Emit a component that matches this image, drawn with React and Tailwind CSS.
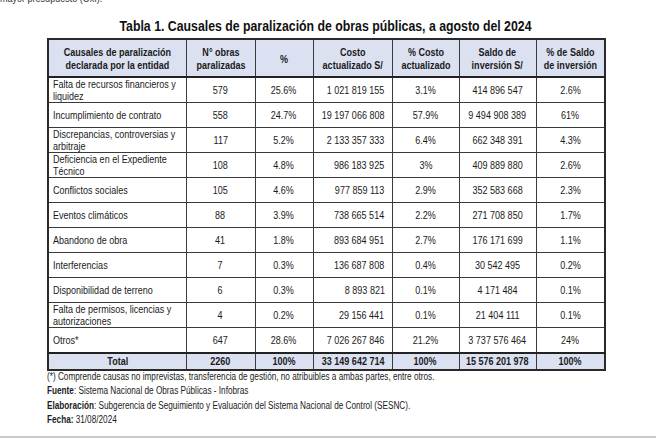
import React from 'react';

// Arial Narrow is not installed, so Liberation Sans (Arial metrics) is squeezed horizontally
const font = "font-['Liberation_Sans','Arial',sans-serif]";

const headers = [
  'Causales de paralización\ndeclarada por la entidad',
  'N° obras\nparalizadas',
  '%',
  'Costo\nactualizado S/',
  '% Costo\nactualizado',
  'Saldo de\ninversión S/',
  '% de Saldo\nde inversión',
];

const widths = ['w-[138px]', 'w-[69px]', 'w-[58px]', 'w-[79px]', 'w-[67px]', 'w-[77px]', 'w-[69px]'];

const rows = [
  ['Falta de recursos financieros y\nliquidez', '579', '25.6%', '1 021 819 155', '3.1%', '414 896 547', '2.6%'],
  ['Incumplimiento de contrato', '558', '24.7%', '19 197 066 808', '57.9%', '9 494 908 389', '61%'],
  ['Discrepancias, controversias y\narbitraje', '117', '5.2%', '2 133 357 333', '6.4%', '662 348 391', '4.3%'],
  ['Deficiencia en el Expediente\nTécnico', '108', '4.8%', '986 183 925', '3%', '409 889 880', '2.6%'],
  ['Conflictos sociales', '105', '4.6%', '977 859 113', '2.9%', '352 583 668', '2.3%'],
  ['Eventos climáticos', '88', '3.9%', '738 665 514', '2.2%', '271 708 850', '1.7%'],
  ['Abandono de obra', '41', '1.8%', '893 684 951', '2.7%', '176 171 699', '1.1%'],
  ['Interferencias', '7', '0.3%', '136 687 808', '0.4%', '30 542 495', '0.2%'],
  ['Disponibilidad de terreno', '6', '0.3%', '8 893 821', '0.1%', '4 171 484', '0.1%'],
  ['Falta de permisos, licencias y\nautorizaciones', '4', '0.2%', '29 156 441', '0.1%', '21 404 111', '0.1%'],
  ['Otros*', '647', '28.6%', '7 026 267 846', '21.2%', '3 737 576 464', '24%'],
];

const total = ['Total', '2260', '100%', '33 149 642 714', '100%', '15 576 201 978', '100%'];

function Narrow({ children, side = 'center' }) {
  const j = side === 'left' ? 'justify-start' : side === 'right' ? 'justify-end' : 'justify-center';
  const o = side === 'left' ? 'origin-left text-left' : side === 'right' ? 'origin-right text-right' : 'origin-center text-center';
  return (
    <div className={`flex ${j}`}>
      <span className={`inline-block whitespace-pre scale-x-[0.82] ${o}`}>{children}</span>
    </div>
  );
}

function side(i) {
  if (i === 0) return 'left';
  if (i === 3) return 'right';
  return 'center';
}

export default function App() {
  return (
    <div className={`w-[656px] h-[439px] bg-white text-[#1a1a1a] ${font} relative overflow-hidden`}>
      {/* cut-off line from the paragraph above */}
      <div className="h-[6px] overflow-hidden">
        <div className="-mt-[8px] text-[11px] leading-[12px] text-[#333] origin-left scale-x-[0.82]">
          mayor presupuesto (OxI).
        </div>
      </div>

      <div className="ml-[47px] w-[557px]">
        <h1 className="mt-[11px] text-center text-[15px] leading-[18px] font-bold text-[#111] scale-x-[0.82]">
          Tabla 1. Causales de paralización de obras públicas, a agosto del 2024
        </h1>

        <table className="mt-[3px] border-collapse border-2 border-[#2a2a2a] table-fixed w-[557px] text-[11px] leading-[12px]">
          <colgroup>
            {widths.map((w, i) => (
              <col key={i} className={w} />
            ))}
          </colgroup>
          <thead>
            <tr className="h-[38px] bg-[#dbe1f1]">
              {headers.map((h, i) => (
                <th key={i} className="border border-[#3a3a3a] border-b-2 border-b-[#222] font-bold align-middle pt-[2px] leading-[13px]">
                  <Narrow>{h}</Narrow>
                </th>
              ))}
            </tr>
          </thead>
          <tbody>
            {rows.map((r, ri) => (
              <tr key={ri} className="h-[25px]">
                {r.map((c, i) => (
                  <td
                    key={i}
                    className={`border border-[#3a3a3a] align-middle ${i === 0 ? 'pl-[4px]' : ''} ${i === 3 ? 'pr-[7px]' : ''}`}
                  >
                    <Narrow side={side(i)}>{c}</Narrow>
                  </td>
                ))}
              </tr>
            ))}
            <tr className="h-[17px] bg-[#dbe1f1]">
              {total.map((c, i) => (
                <td
                  key={i}
                  className={`border border-[#3a3a3a] border-t-2 border-t-[#222] font-bold align-middle ${i === 3 ? 'pr-[7px]' : ''}`}
                >
                  <Narrow side={i === 3 ? 'right' : 'center'}>{c}</Narrow>
                </td>
              ))}
            </tr>
          </tbody>
        </table>

        <div className="-mt-[1px] text-[10px] leading-[14.5px] text-[#222] origin-left scale-x-[0.82] whitespace-nowrap">
          <p>(*) Comprende causas no imprevistas, transferencia de gestión, no atribuibles a ambas partes, entre otros.</p>
          <p>
            <span className="font-bold">Fuente</span>: Sistema Nacional de Obras Públicas - Infobras
          </p>
          <p>
            <span className="font-bold">Elaboración</span>: Subgerencia de Seguimiento y Evaluación del Sistema Nacional de Control (SESNC).
          </p>
          <p>
            <span className="font-bold">Fecha:</span> 31/08/2024
          </p>
        </div>
      </div>

      <div className="absolute left-0 right-0 bottom-[1px] h-[2px] bg-[#c8c8c8]" />
    </div>
  );
}
